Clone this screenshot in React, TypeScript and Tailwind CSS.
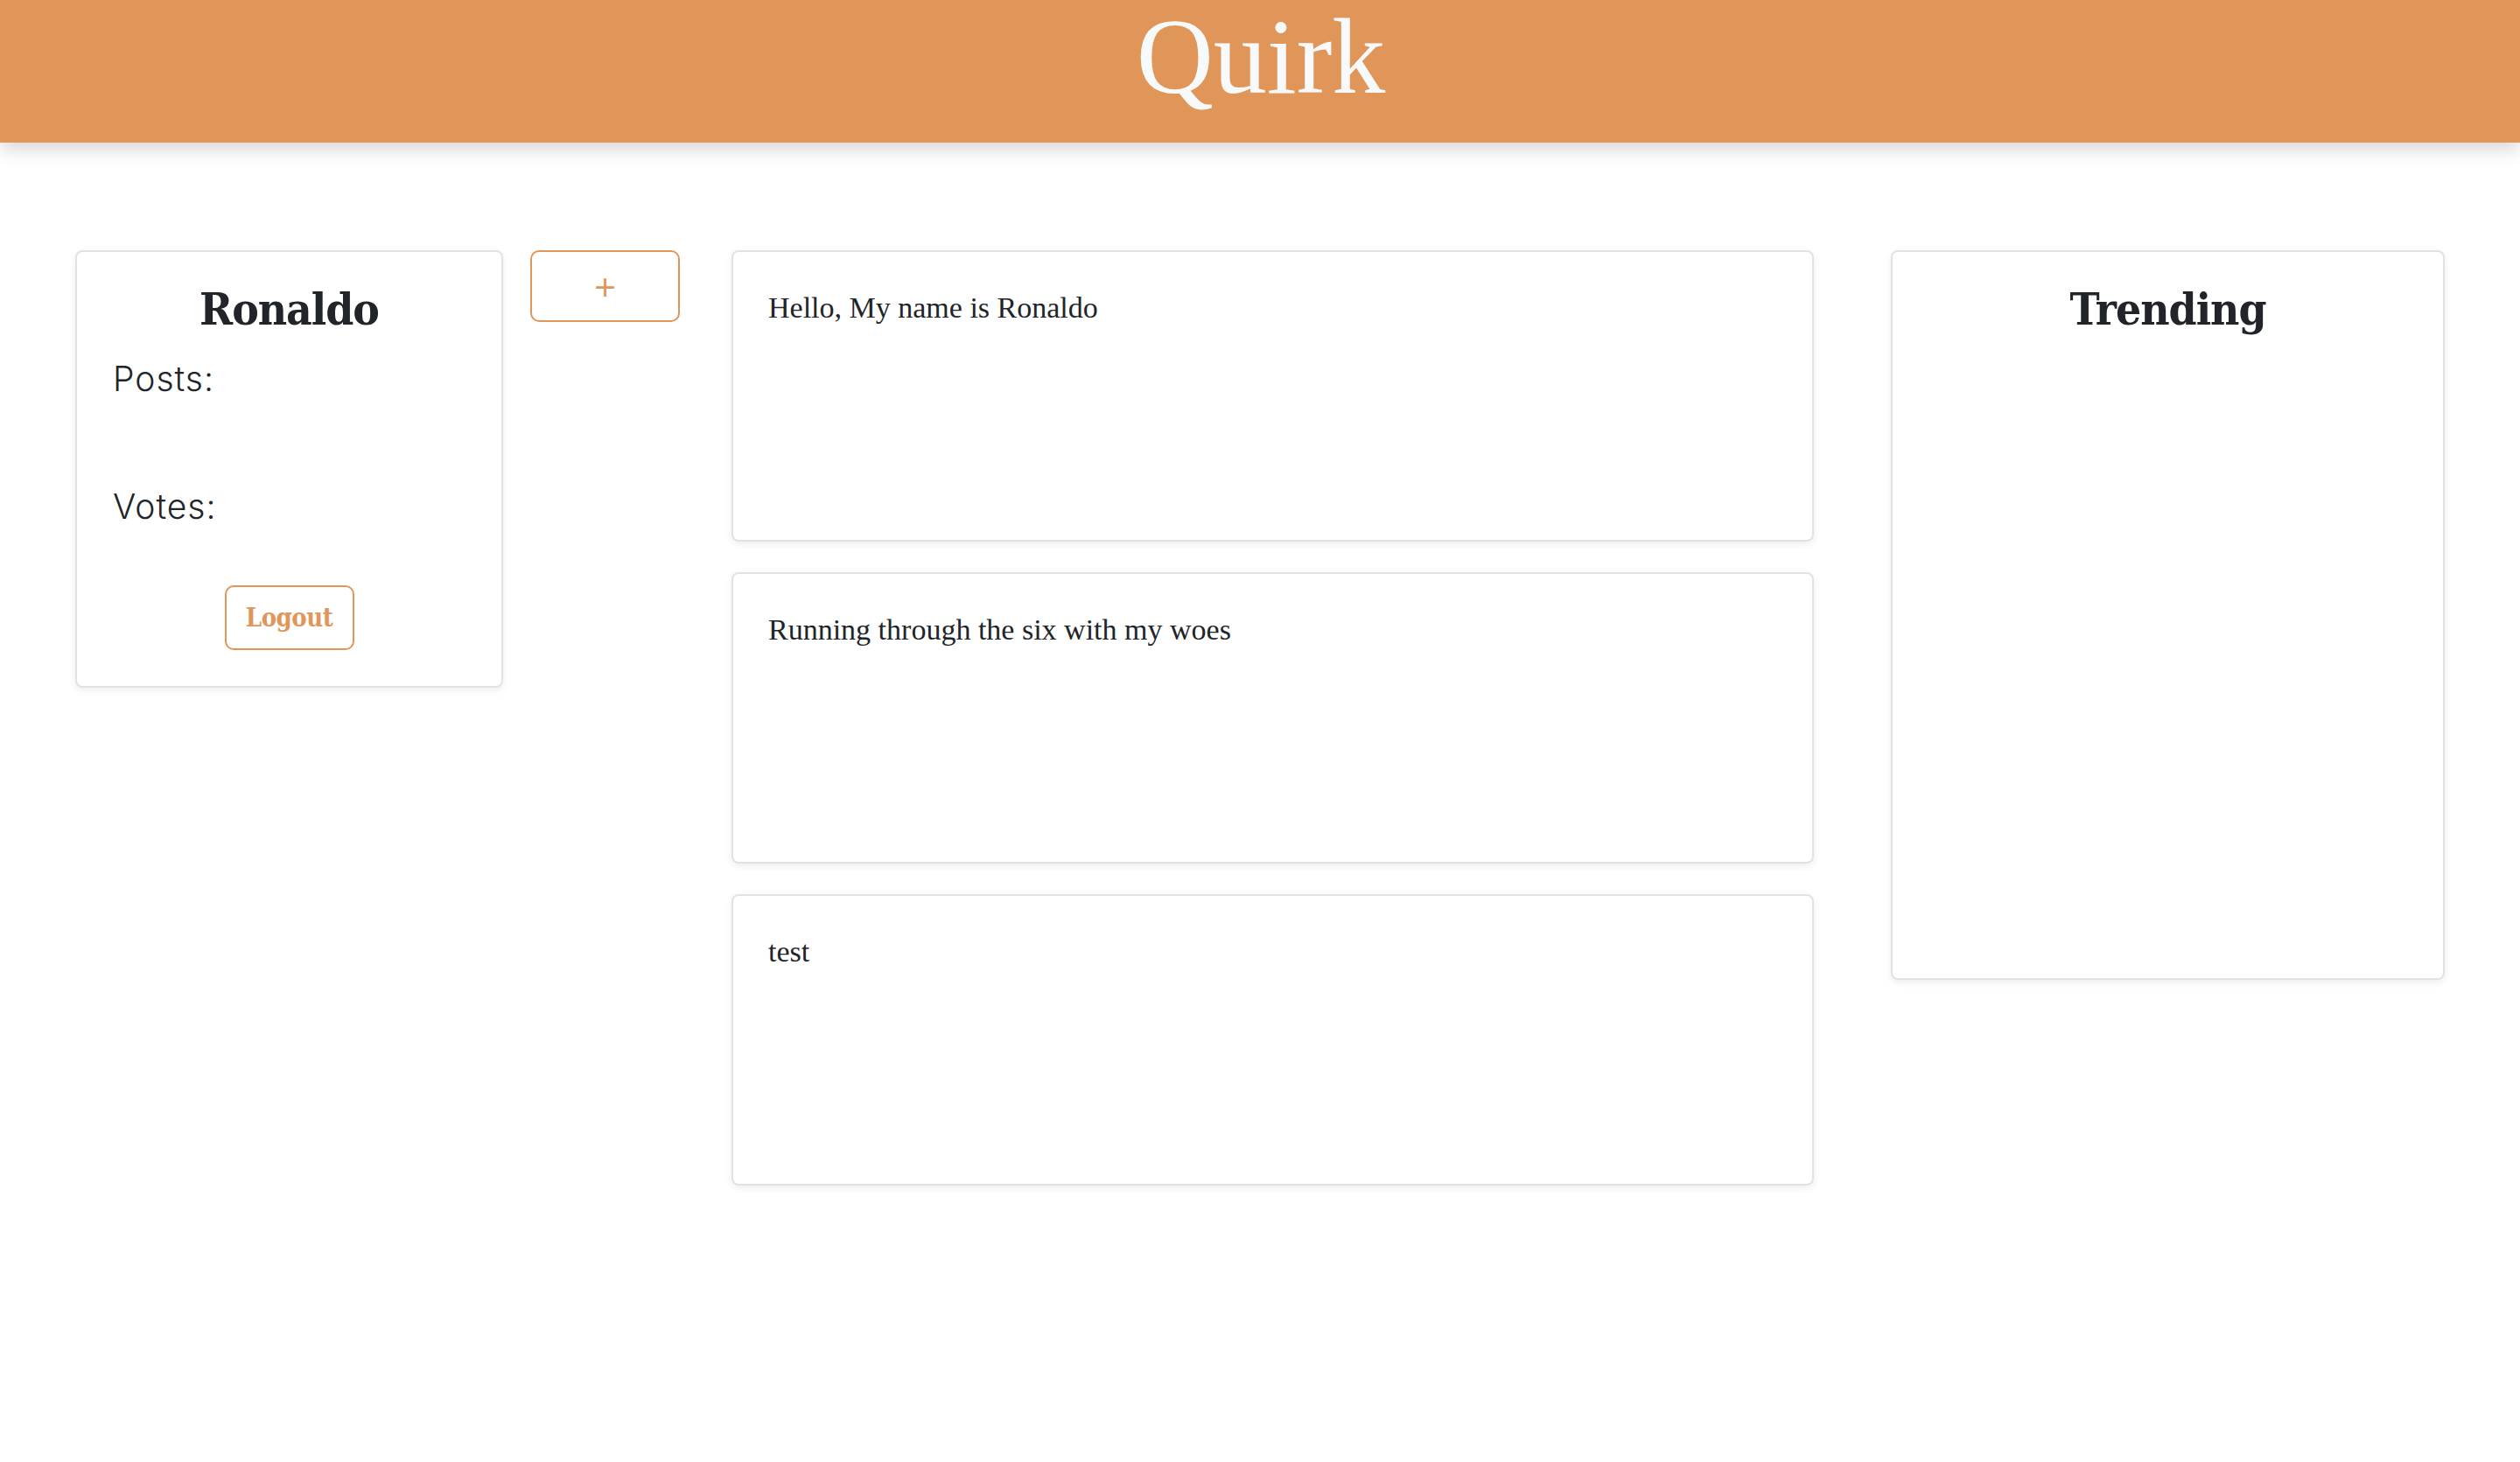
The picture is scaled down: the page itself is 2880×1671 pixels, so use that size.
const slab = "font-['DejaVu_Serif_Condensed','DejaVu_Serif',serif] font-stretch-condensed font-bold";
const serif = "font-['Liberation_Serif','Times_New_Roman',serif]";
const light = "font-['Inter','Open_Sans',sans-serif] font-light";

const posts = [
  { id: 1, body: 'Hello, My name is Ronaldo' },
  { id: 2, body: 'Running through the six with my woes' },
  { id: 3, body: 'test' },
];

function Header() {
  return (
    <header className="relative z-10 h-[163px] bg-[#e09658] shadow-[0_6px_22px_rgba(0,0,0,0.18)] flex justify-center">
      <h1 className={`${serif} text-[122px] leading-none text-[#f8f9fa] pt-[4px] pl-[2px]`}>Quirk</h1>
    </header>
  );
}

function ProfileCard({ name }: { name: string }) {
  return (
    <div className="w-[489px] h-[500px] shrink-0 bg-white border-2 border-[#e2e2e2] rounded-[8px] shadow-[0_3px_8px_rgba(0,0,0,0.07)] pt-[40px] pl-[41px] pr-[41px] flex flex-col">
      <h2 className={`${slab} text-[51px] tracking-[-1px] leading-none text-[#212529] text-center`}>{name}</h2>
      <p className={`${light} text-[39px] tracking-[1px] leading-none text-[#212529] mt-[34px]`}>Posts:</p>
      <p className={`${light} text-[39px] tracking-[1px] leading-none text-[#212529] mt-[107px]`}>Votes:</p>
      <div className="flex justify-center mt-[71px]">
        <button className={`${slab} w-[148px] h-[74px] border-2 border-[#e0965a] rounded-[10px] text-[29px] tracking-[-0.5px] text-[#e0965a] bg-white flex items-center justify-center pt-[2px]`}>
          Logout
        </button>
      </div>
    </div>
  );
}

function PostCard({ body }: { body: string }) {
  return (
    <div className="h-[333px] bg-white border-2 border-[#e2e2e2] rounded-[8px] shadow-[0_3px_8px_rgba(0,0,0,0.07)] pt-[44px] pl-[40px] pr-[40px]">
      <p className={`${serif} text-[34px] leading-[40px] text-[#212529]`}>{body}</p>
    </div>
  );
}

export default function App() {
  return (
    <div className="min-h-[1671px] bg-white">
      <Header />
      <main className="flex items-start px-[86px] pt-[123px]">
        <ProfileCard name="Ronaldo" />
        <button className="ml-[31px] w-[171px] h-[82px] shrink-0 border-2 border-[#e0965a] rounded-[10px] bg-white flex items-center justify-center">
          <span className={`${light} text-[46px] leading-none text-[#e0965a] font-extralight -mt-[4px]`}>+</span>
        </button>
        <section className="ml-[59px] w-[1237px] shrink-0 flex flex-col gap-[35px]">
          {posts.map((p) => (
            <PostCard key={p.id} body={p.body} />
          ))}
        </section>
        <aside className="ml-[88px] w-[633px] h-[834px] shrink-0 bg-white border-2 border-[#e2e2e2] rounded-[8px] shadow-[0_3px_8px_rgba(0,0,0,0.07)] pt-[40px]">
          <h2 className={`${slab} text-[51px] tracking-[-1px] leading-none text-[#212529] text-center`}>Trending</h2>
        </aside>
      </main>
    </div>
  );
}
